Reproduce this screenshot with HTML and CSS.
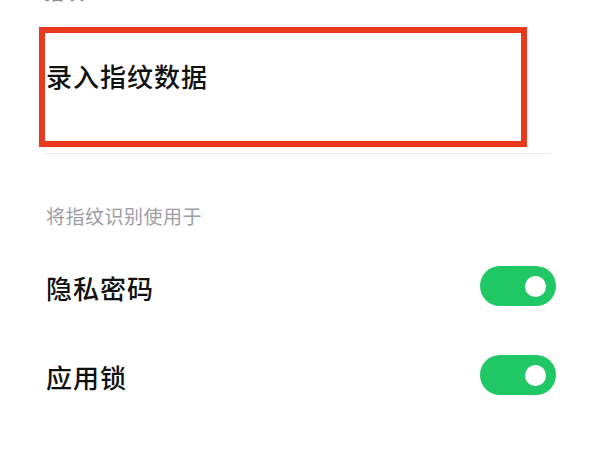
FILE: index.html
```html
<!DOCTYPE html>
<html lang="zh-CN">
<head>
<meta charset="utf-8">
<link rel="stylesheet" href="styles.css">
</head>
<body>
<div class="page">
  <div class="cut-title">指纹</div>
  <div class="entry">录入指纹数据</div>
  <div class="divider"></div>
  <div class="section-label">将指纹识别使用于</div>
  <div class="row">
    <span class="row-text">隐私密码</span>
    <span class="switch"><span class="knob"></span></span>
  </div>
  <div class="row">
    <span class="row-text">应用锁</span>
    <span class="switch"><span class="knob"></span></span>
  </div>
</div>
</body>
</html>
```
FILE: styles.css
```css
html, body {
  margin: 0;
  padding: 0;
  background: #ffffff;
}
body {
  width: 600px;
  height: 450px;
  overflow: hidden;
  font-family: "Noto Sans CJK SC", "Noto Sans", sans-serif;
  color: #111111;
}
.page {
  display: flex;
  flex-direction: column;
}
.cut-title {
  margin-top: -20px;
  height: 24px;
  line-height: 24px;
  padding-left: 44px;
  font-size: 20px;
  color: #8a8a8a;
}
.entry {
  box-sizing: border-box;
  margin-left: 39px;
  margin-top: 23px;
  width: 488px;
  height: 120px;
  border: 6px solid #e9391d;
  padding: 30px 0 0 1px;
  font-size: 26px;
  line-height: 26px;
  font-weight: 500;
  letter-spacing: 1px;
}
.divider {
  margin: 6px 49px 0 45px;
  height: 1px;
  background: #e9e9ec;
}
.section-label {
  padding: 52px 0 18px 46px;
  font-size: 19px;
  line-height: 19px;
  color: #9c9da4;
  letter-spacing: 0.5px;
}
.row {
  height: 89px;
  display: flex;
  align-items: center;
  justify-content: space-between;
  padding: 0 44px 0 46px;
}
.row-text {
  font-size: 26px;
  line-height: 26px;
  font-weight: 500;
  letter-spacing: 1px;
}
.switch {
  width: 76px;
  height: 40px;
  border-radius: 20px;
  background: #1fc865;
  display: flex;
  align-items: center;
  justify-content: flex-end;
  padding-right: 10px;
  box-sizing: border-box;
  margin-top: -3px;
}
.knob {
  width: 21px;
  height: 21px;
  border-radius: 50%;
  background: #ffffff;
}
```
